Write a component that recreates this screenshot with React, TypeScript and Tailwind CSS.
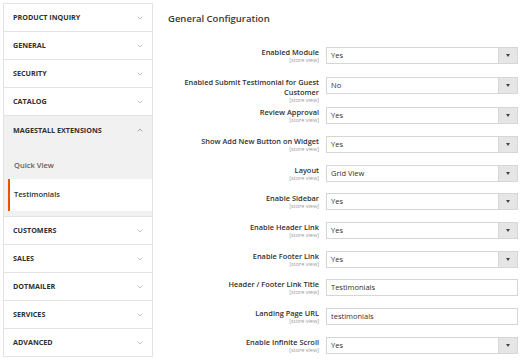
import { ChevronDown, ChevronUp } from 'lucide-react'

const topTabs = ['PRODUCT INQUIRY', 'GENERAL', 'SECURITY', 'CATALOG']
const bottomTabs = ['CUSTOMERS', 'SALES', 'DOTMAILER', 'SERVICES', 'ADVANCED']

type Field = { label: string[]; value: string; kind: 'select' | 'text'; h: string }

const fields: Field[] = [
  { label: ['Enabled Module'], value: 'Yes', kind: 'select', h: 'h-[30px]' },
  { label: ['Enabled Submit Testimonial for Guest', 'Customer'], value: 'No', kind: 'select', h: 'h-[30px]' },
  { label: ['Review Approval'], value: 'Yes', kind: 'select', h: 'h-[29px]' },
  { label: ['Show Add New Button on Widget'], value: 'Yes', kind: 'select', h: 'h-[29px]' },
  { label: ['Layout'], value: 'Grid View', kind: 'select', h: 'h-[28px]' },
  { label: ['Enable Sidebar'], value: 'Yes', kind: 'select', h: 'h-[29px]' },
  { label: ['Enable Header Link'], value: 'Yes', kind: 'select', h: 'h-[29px]' },
  { label: ['Enable Footer Link'], value: 'Yes', kind: 'select', h: 'h-[28px]' },
  { label: ['Header / Footer Link Title'], value: 'Testimonials', kind: 'text', h: 'h-[29px]' },
  { label: ['Landing Page URL'], value: 'testimonials', kind: 'text', h: 'h-[29px]' },
  { label: ['Enable Infinite Scroll'], value: 'Yes', kind: 'select', h: 'h-[29px]' },
]

function Tab({ label }: { label: string }) {
  return (
    <div className="h-[28px] flex items-center justify-between pl-[9px] pr-[8px] border-b border-[#e3e3e3] bg-white">
      <span className="text-[7.2px] font-bold text-[#303030]">{label}</span>
      <ChevronDown className="w-[8px] h-[8px] text-[#8a8a8a]" strokeWidth={1.5} />
    </div>
  )
}

function Control({ f }: { f: Field }) {
  return (
    <div className="w-[192px] h-[17px] flex border border-[#d6d6d6] bg-white">
      <span className="flex-1 pl-[4px] text-[7.5px] leading-[15px] text-[#303030]">{f.value}</span>
      {f.kind === 'select' && (
        <span className="w-[19px] flex items-center justify-center bg-[#e6e6e6] border-l border-[#d6d6d6]">
          <span className="w-0 h-0 border-l-[2.5px] border-r-[2.5px] border-t-[3px] border-l-transparent border-r-transparent border-t-[#444]" />
        </span>
      )}
    </div>
  )
}

export default function App() {
  return (
    <div className="w-[521px] h-[360px] overflow-hidden bg-white flex pt-[3px] pl-[3px]" style={{ fontFamily: '"Open Sans", sans-serif' }}>
      {/* SIDEBAR */}
      <aside className="w-[150px] shrink-0 border-x border-t border-[#e3e3e3] self-start">
        {topTabs.map(t => <Tab key={t} label={t} />)}
        <div className="bg-[#f1f1f1] border-b border-[#e3e3e3]">
          <div className="h-[28px] flex items-center justify-between pl-[9px] pr-[8px]">
            <span className="text-[7.2px] font-bold text-[#303030]">MAGESTALL EXTENSIONS</span>
            <ChevronUp className="w-[8px] h-[8px] text-[#555]" strokeWidth={1.5} />
          </div>
          <div className="h-[35px] flex items-center pl-[10px] pt-[8px] text-[7.5px] font-semibold text-[#676056]">Quick View</div>
          <div className="h-[32px] flex items-center pl-[4px] bg-white border-l-[2px] border-[#eb5202] ml-[4px] text-[7.5px] font-semibold text-[#303030]">Testimonials</div>
          <div className="h-[5px]" />
        </div>
        {bottomTabs.map(t => <Tab key={t} label={t} />)}
      </aside>

      {/* MAIN */}
      <main className="flex-1 pl-[15px]">
        <h2 className="mt-[9px] text-[9.5px] leading-[14px] font-semibold text-[#41362f]">General Configuration</h2>
        <div className="mt-[21px] flex flex-col">
          {fields.map((f, i) => (
            <div key={i} className={`flex items-start ${f.h}`}>
              <div className="w-[158px] shrink-0 text-right pr-[7px]">
                {f.label.map(l => (
                  <div key={l} className="text-[7.4px] leading-[10px] font-semibold text-[#303030]">{l}</div>
                ))}
                <div className="text-[5.5px] leading-[7px] text-[#9a9a9a]">[store view]</div>
              </div>
              <Control f={f} />
            </div>
          ))}
        </div>
      </main>
    </div>
  )
}
